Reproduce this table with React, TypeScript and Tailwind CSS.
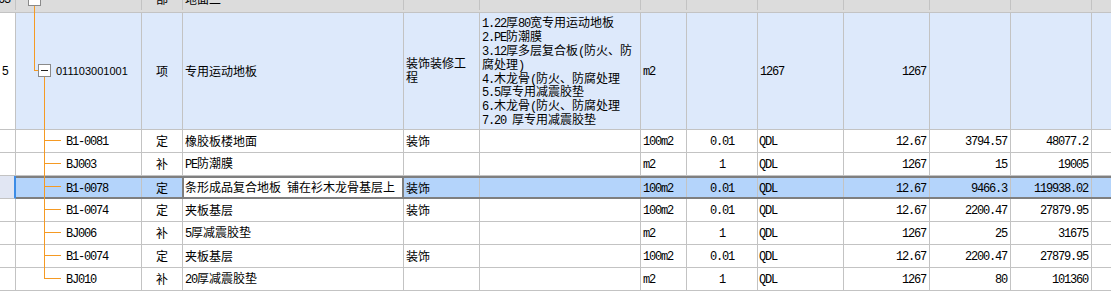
import React from "react";

type Item = {
  code: string;
  kind: string;
  name: string;
  major: string;
  unit: string;
  qty: string;
  qdl: string;
  amount: string;
  price: string;
  total: string;
};

const items: Item[] = [
  { code: "B1-0081", kind: "定", name: "橡胶板楼地面", major: "装饰", unit: "100m2", qty: "0.01", qdl: "QDL", amount: "12.67", price: "3794.57", total: "48077.2" },
  { code: "BJ003", kind: "补", name: "PE防潮膜", major: "", unit: "m2", qty: "1", qdl: "QDL", amount: "1267", price: "15", total: "19005" },
  { code: "B1-0078", kind: "定", name: "条形成品复合地板 铺在衫木龙骨基层上", major: "装饰", unit: "100m2", qty: "0.01", qdl: "QDL", amount: "12.67", price: "9466.3", total: "119938.02" },
  { code: "B1-0074", kind: "定", name: "夹板基层", major: "装饰", unit: "100m2", qty: "0.01", qdl: "QDL", amount: "12.67", price: "2200.47", total: "27879.95" },
  { code: "BJ006", kind: "补", name: "5厚减震胶垫", major: "", unit: "m2", qty: "1", qdl: "QDL", amount: "1267", price: "25", total: "31675" },
  { code: "B1-0074", kind: "定", name: "夹板基层", major: "装饰", unit: "100m2", qty: "0.01", qdl: "QDL", amount: "12.67", price: "2200.47", total: "27879.95" },
  { code: "BJ010", kind: "补", name: "20厚减震胶垫", major: "", unit: "m2", qty: "1", qdl: "QDL", amount: "1267", price: "80", total: "101360" },
];

const desc = [
  "1.22厚80宽专用运动地板",
  "2.PE防潮膜",
  "3.12厚多层复合板(防火、防",
  "腐处理)",
  "4.木龙骨(防火、防腐处理",
  "5.5厚专用减震胶垫",
  "6.木龙骨(防火、防腐处理",
  "7.20 厚专用减震胶垫",
];

// half-width chars drawn in a mono face, 6px per char like the old SimSun grid
function Mix({ text }: { text: string }) {
  const parts = text.split(/([ -~]+)/);
  return (
    <span className="whitespace-pre">
      {parts.map((p, i) =>
        /[ -~]/.test(p) ? (
          <span key={i} className="font-['Liberation_Mono',monospace] tracking-[-1.2px]">
            {p}
          </span>
        ) : (
          p
        )
      )}
    </span>
  );
}

function Cell({ w, className = "", children }: { w: string; className?: string; children?: React.ReactNode }) {
  return (
    <div className={`${w} shrink-0 h-full flex items-center border-r border-[#c3c3c3] whitespace-nowrap ${className}`}>
      {children}
    </div>
  );
}

function Box({ className }: { className: string }) {
  return (
    <span className={`absolute flex h-[13px] w-[13px] items-center justify-center border border-[#8a8a8a] bg-white ${className}`}>
      <span className="h-px w-[7px] bg-[#222]" />
    </span>
  );
}

function ItemRow({ item, last, selected }: { item: Item; last: boolean; selected: boolean }) {
  const vLine = last
    ? selected
      ? "top-[-2px] h-[11px]"
      : "top-0 h-[11px]"
    : selected
    ? "top-[-2px] bottom-[-2px]"
    : "top-0 bottom-[-1px]";

  return (
    <div className="flex h-[23px]">
      <div
        className={
          selected
            ? "w-[16px] shrink-0 border-b border-[#c3c3c3] border-r-2 border-r-[#3c8ce6] bg-[#e1e6f3]"
            : "w-[16px] shrink-0 border-b border-r border-[#c3c3c3]"
        }
      />
      <div
        className={
          selected
            ? "flex flex-1 border-y-2 border-[#7f7f7f] bg-[#b4d4fb]"
            : "flex flex-1 border-b border-[#c3c3c3] bg-white"
        }
      >
        <Cell w="w-[126px]" className="relative">
          <span className={`absolute left-[28px] w-px bg-[#f59a23] ${vLine}`} />
          <span className={`absolute left-[28px] h-px w-[17px] bg-[#f59a23] ${selected ? "top-[8px]" : "top-[10px]"}`} />
          <span className="pl-[50px]">
            <Mix text={item.code} />
          </span>
        </Cell>

        {selected ? (
          <>
            <div className="w-[40px] shrink-0 h-full flex items-center justify-center">{item.kind}</div>
            <div className="w-[222px] shrink-0 h-full flex items-center border-x-2 border-[#7f7f7f] bg-white pl-[1px] whitespace-nowrap">
              <Mix text={item.name} />
            </div>
          </>
        ) : (
          <>
            <Cell w="w-[41px]" className="justify-center">
              {item.kind}
            </Cell>
            <Cell w="w-[221px]" className="pl-[2px]">
              <Mix text={item.name} />
            </Cell>
          </>
        )}

        <Cell w="w-[76px]" className="pl-[2px]">
          {item.major}
        </Cell>
        <Cell w="w-[161px]" />
        <Cell w="w-[46px]" className="pl-[2px]">
          <Mix text={item.unit} />
        </Cell>
        <Cell w="w-[71px]" className="justify-center">
          <Mix text={item.qty} />
        </Cell>
        <Cell w="w-[86px]" className="pl-[1px]">
          <Mix text={item.qdl} />
        </Cell>
        <Cell w="w-[86px]" className="justify-end pr-[3px]">
          <Mix text={item.amount} />
        </Cell>
        <Cell w="w-[81px]" className="justify-end pr-[3px]">
          <Mix text={item.price} />
        </Cell>
        <Cell w="w-[81px]" className="justify-end pr-[3px]">
          <Mix text={item.total} />
        </Cell>
        <div className="flex-1" />
      </div>
    </div>
  );
}

export default function App() {
  return (
    <div className="w-[1111px] h-[297px] overflow-hidden bg-white text-black text-[12px] leading-none font-['Noto_Sans_CJK_SC',sans-serif]">
      {/* parent row, scrolled mostly out of view */}
      <div className="h-[13px] overflow-hidden border-b border-[#c3c3c3] bg-[#dcdcdc]">
        <div className="-mt-[13px] flex h-[23px]">
          <Cell w="w-[16px]">
            <span className="-ml-[2px]">
              <Mix text="63" />
            </span>
          </Cell>
          <Cell w="w-[126px]" className="relative">
            <Box className="left-[12px] top-[6px]" />
            <span className="absolute left-[18px] top-[19px] h-[10px] w-px bg-[#f59a23]" />
          </Cell>
          <Cell w="w-[41px]" className="justify-center">
            部
          </Cell>
          <Cell w="w-[221px]" className="pl-[2px]">
            地面二
          </Cell>
          <Cell w="w-[76px]" />
          <Cell w="w-[161px]" />
          <Cell w="w-[46px]" />
          <Cell w="w-[71px]" />
          <Cell w="w-[86px]" />
          <Cell w="w-[86px]" />
          <Cell w="w-[81px]" />
          <Cell w="w-[81px]" />
          <div className="flex-1" />
        </div>
      </div>

      {/* bill item */}
      <div className="flex h-[117px] border-b border-[#c3c3c3]">
        <div className="w-[16px] shrink-0 flex items-center border-r border-[#c3c3c3] bg-white pl-[2px] font-['Liberation_Sans',sans-serif]">
          5
        </div>
        <div className="flex flex-1 bg-[#dde9fb]">
          <Cell w="w-[126px]" className="relative">
            <span className="absolute left-[18px] top-[-1px] h-[59px] w-px bg-[#f59a23]" />
            <span className="absolute left-[18px] top-[57px] h-px w-[4px] bg-[#f59a23]" />
            <Box className="left-[22px] top-[51px]" />
            <span className="absolute left-[28px] top-[64px] bottom-[-1px] w-px bg-[#f59a23]" />
            <span className="pl-[40px] text-[11px] font-['Liberation_Sans',sans-serif]">011103001001</span>
          </Cell>
          <Cell w="w-[41px]" className="justify-center">
            项
          </Cell>
          <Cell w="w-[221px]" className="pl-[2px]">
            专用运动地板
          </Cell>
          <Cell w="w-[76px]" className="pl-[2px]">
            <div>
              <div className="h-[14px] leading-[12px]">装饰装修工</div>
              <div className="h-[14px] leading-[12px]">程</div>
            </div>
          </Cell>
          <Cell w="w-[161px]" className="pl-[2px]">
            <div className="pt-[1px]">
              {desc.map((d, i) => (
                <div key={i} className="h-[13.8px] leading-[12px]">
                  <Mix text={d} />
                </div>
              ))}
            </div>
          </Cell>
          <Cell w="w-[46px]" className="pl-[2px]">
            <Mix text="m2" />
          </Cell>
          <Cell w="w-[71px]" />
          <Cell w="w-[86px]" className="pl-[2px]">
            <Mix text="1267" />
          </Cell>
          <Cell w="w-[86px]" className="justify-end pr-[3px]">
            <Mix text="1267" />
          </Cell>
          <Cell w="w-[81px]" />
          <Cell w="w-[81px]" />
          <div className="flex-1" />
        </div>
      </div>

      {items.map((item, i) => (
        <ItemRow key={i} item={item} last={i === items.length - 1} selected={i === 2} />
      ))}
    </div>
  );
}
